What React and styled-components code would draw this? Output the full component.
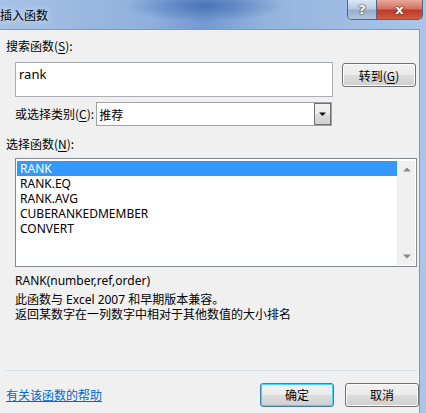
import React from 'react';
import styled, { createGlobalStyle } from 'styled-components';

const Global = createGlobalStyle`
  html, body { margin: 0; padding: 0; background: #a9c4e8; }
  body { font-family: "Noto Sans", "Noto Sans CJK SC", sans-serif; font-size: 12px; color: #000; }
`

const Window = styled.div`
  width: 426px;
  height: 413px;
  display: flex;
  flex-direction: column;
  overflow: hidden;
  background: linear-gradient(90deg, #a4c0e6 0%, #8eb0de 60%, #a9c6ea 100%);
`

const TitleBar = styled.div`
  height: 29px;
  flex: none;
  display: flex;
  align-items: flex-start;
  justify-content: space-between;
  background:
    radial-gradient(ellipse 80px 16px at 205px 6px, rgba(60,105,175,0.75), rgba(60,105,175,0) 100%),
    linear-gradient(90deg, #a7c2e6 0%, #8fb0dd 35%, #7399d1 48%, #93b3de 62%, #aac5e9 100%);
`

const Title = styled.div`
  font-family: "Noto Sans CJK SC", sans-serif;
  font-size: 12px;
  line-height: 14px;
  margin-top: 8px;
  color: #000;
  text-shadow: 0 0 6px rgba(255,255,255,0.9);
`

const Controls = styled.div`
  display: flex;
  margin-right: 3px;
  border: 1px solid #4f6784;
  border-top: none;
  border-radius: 0 0 5px 5px;
  overflow: hidden;
  height: 19px;
`

const CtrlButton = styled.div`
  width: ${p => p.$w}px;
  height: 19px;
  display: flex;
  align-items: center;
  justify-content: center;
  font-family: "DejaVu Sans", sans-serif;
  font-weight: bold;
  font-size: ${p => p.$fs}px;
  color: #fff;
  text-shadow: 0 0 2px #333, 0 0 1px #222;
  background: ${p => p.$close
    ? 'linear-gradient(180deg, #e9a99c 0%, #d3725f 45%, #c0392a 55%, #d05a3f 100%)'
    : 'linear-gradient(180deg, #dce6f3 0%, #b9cbe2 45%, #98adc9 55%, #b2c6df 100%)'};
  border-left: ${p => p.$close ? '1px solid #4f6784' : 'none'};
`

const Body = styled.div`
  flex: 1;
  display: flex;
`

const Panel = styled.div`
  width: 420px;
  background: #f0f0f0;
  border: 1px solid #8298b5;
  border-left: none;
  border-bottom: none;
  display: flex;
  flex-direction: column;
  padding-left: 6px;
  box-sizing: border-box;
`

const Label = styled.div`
  font-family: "Noto Sans CJK SC", sans-serif;
  font-size: 12px;
  line-height: 16px;
  margin-left: ${p => p.$indent || 0}px;
  margin-top: ${p => p.$mt || 0}px;
  white-space: nowrap;
  u { text-decoration: underline; text-underline-offset: 2px; }
`

const SearchRow = styled.div`
  display: flex;
  align-items: flex-start;
  margin-top: 8px;
  margin-left: 9px;
`

const SearchBox = styled.div`
  width: 318px;
  height: 35px;
  box-sizing: border-box;
  background: #fff;
  border: 1px solid #abadb3;
  border-top-color: #a3a7b0;
  padding: 3px 0 0 3px;
  font-size: 13px;
  line-height: 16px;
`

const Button = styled.div`
  width: 74px;
  height: 24px;
  box-sizing: border-box;
  margin-left: ${p => p.$ml || 0}px;
  margin-top: ${p => p.$mt || 0}px;
  border: 1px solid ${p => p.$default ? '#3c7fb1' : '#707070'};
  border-radius: 3px;
  display: flex;
  align-items: center;
  justify-content: center;
  font-family: "Noto Sans CJK SC", sans-serif;
  font-size: 12px;
  background: linear-gradient(180deg, #f2f2f2 0%, #ebebeb 48%, #dddddd 52%, #cfcfcf 100%);
  box-shadow: inset 0 0 0 1px ${p => p.$default ? '#48d0ff' : '#fcfcfc'};
  flex: none;
  u { text-decoration: underline; text-underline-offset: 2px; }
`

const CategoryRow = styled.div`
  display: flex;
  align-items: center;
  margin-top: 5px;
  margin-left: 9px;
`

const Select = styled.div`
  width: 236px;
  height: 24px;
  box-sizing: border-box;
  margin-left: 2px;
  background: #fff;
  border: 1px solid #a2a2a2;
  display: flex;
  align-items: center;
  justify-content: space-between;
  padding-left: 2px;
  font-family: "Noto Sans CJK SC", sans-serif;
`

const DropButton = styled.div`
  width: 17px;
  height: 22px;
  box-sizing: border-box;
  border: 1px solid #707070;
  background: linear-gradient(180deg, #f2f2f2 0%, #ebebeb 48%, #dddddd 52%, #cfcfcf 100%);
  display: flex;
  align-items: center;
  justify-content: center;
`

const ListBox = styled.div`
  width: 402px;
  height: 109px;
  box-sizing: border-box;
  margin: 6px 0 0 9px;
  background: #fff;
  border: 1px solid #828790;
  display: flex;
  padding: 2px 1px 1px 1px;
`

const Items = styled.div`
  flex: 1;
  display: flex;
  flex-direction: column;
`

const Item = styled.div`
  height: 15px;
  line-height: 13px;
  box-sizing: border-box;
  padding-left: 2px;
  font-size: 12px;
  color: ${p => p.$selected ? '#fff' : '#000'};
  background: ${p => p.$selected ? '#3399ff' : 'transparent'};
  border: 1px dotted ${p => p.$selected ? '#cc6633' : 'transparent'};
`

const ScrollBar = styled.div`
  width: 17px;
  display: flex;
  flex-direction: column;
  justify-content: space-between;
  align-items: center;
  background: #f0f0f0;
  border-left: 1px solid #e8e8e8;
  padding: 6px 0 6px;
`

const Info = styled.div`
  margin: 6px 0 0 9px;
  line-height: 15px;
  font-size: 12px;
`

const Desc = styled.div`
  margin: 4px 0 0 9px;
  font-family: "Noto Sans", "Noto Sans CJK SC", sans-serif;
  font-size: 12px;
  line-height: 15px;
`

const Separator = styled.div`
  margin-top: auto;
  width: 411px;
  height: 1px;
  background: #d5dfe5;
`

const Footer = styled.div`
  display: flex;
  align-items: center;
  height: 42px;
  padding-bottom: 1px;
  padding-top: 6px;
  box-sizing: border-box;
`

const HelpLink = styled.span`
  font-family: "Noto Sans CJK SC", sans-serif;
  font-size: 12px;
  color: #0066cc;
  text-decoration: underline;
  margin-right: auto;
`

const RightFrame = styled.div`
  flex: 1;
`

const Triangle = ({ up, color = '#8a8a8a', w = 8 }) => (
  <svg width={w} height={w / 2 + 1} viewBox="0 0 8 5">
    <path d={up ? 'M0 4.5 L4 0.5 L8 4.5 Z' : 'M0 0.5 L8 0.5 L4 4.5 Z'} fill={color} />
  </svg>
)

const items = ['RANK', 'RANK.EQ', 'RANK.AVG', 'CUBERANKEDMEMBER', 'CONVERT'];

export default function App() {
  return (
    <Window>
      <Global />
      <TitleBar>
        <Title>插入函数</Title>
        <Controls>
          <CtrlButton $w={28} $fs={13}>?</CtrlButton>
          <CtrlButton $w={45} $fs={13} $close>x</CtrlButton>
        </Controls>
      </TitleBar>
      <Body>
        <Panel>
          <Label $mt={8}>搜索函数(<u>S</u>):</Label>
          <SearchRow>
            <SearchBox>rank</SearchBox>
            <Button $ml={9} $mt={1}>转到(<u>G</u>)</Button>
          </SearchRow>
          <CategoryRow>
            <Label>或选择类别(<u>C</u>):</Label>
            <Select>
              推荐
              <DropButton><Triangle color="#111" w={7} /></DropButton>
            </Select>
          </CategoryRow>
          <Label $mt={10}>选择函数(<u>N</u>):</Label>
          <ListBox>
            <Items>
              {items.map((it, i) => (
                <Item key={it} $selected={i === 0}>{it}</Item>
              ))}
            </Items>
            <ScrollBar>
              <Triangle up />
              <Triangle />
            </ScrollBar>
          </ListBox>
          <Info>RANK(number,ref,order)</Info>
          <Desc>
            此函数与 Excel 2007 和早期版本兼容。<br />
            返回某数字在一列数字中相对于其他数值的大小排名
          </Desc>
          <Separator />
          <Footer>
            <HelpLink>有关该函数的帮助</HelpLink>
            <Button $default>确定</Button>
            <Button $ml={11}>取消</Button>
          </Footer>
        </Panel>
        <RightFrame />
      </Body>
    </Window>
  );
}
